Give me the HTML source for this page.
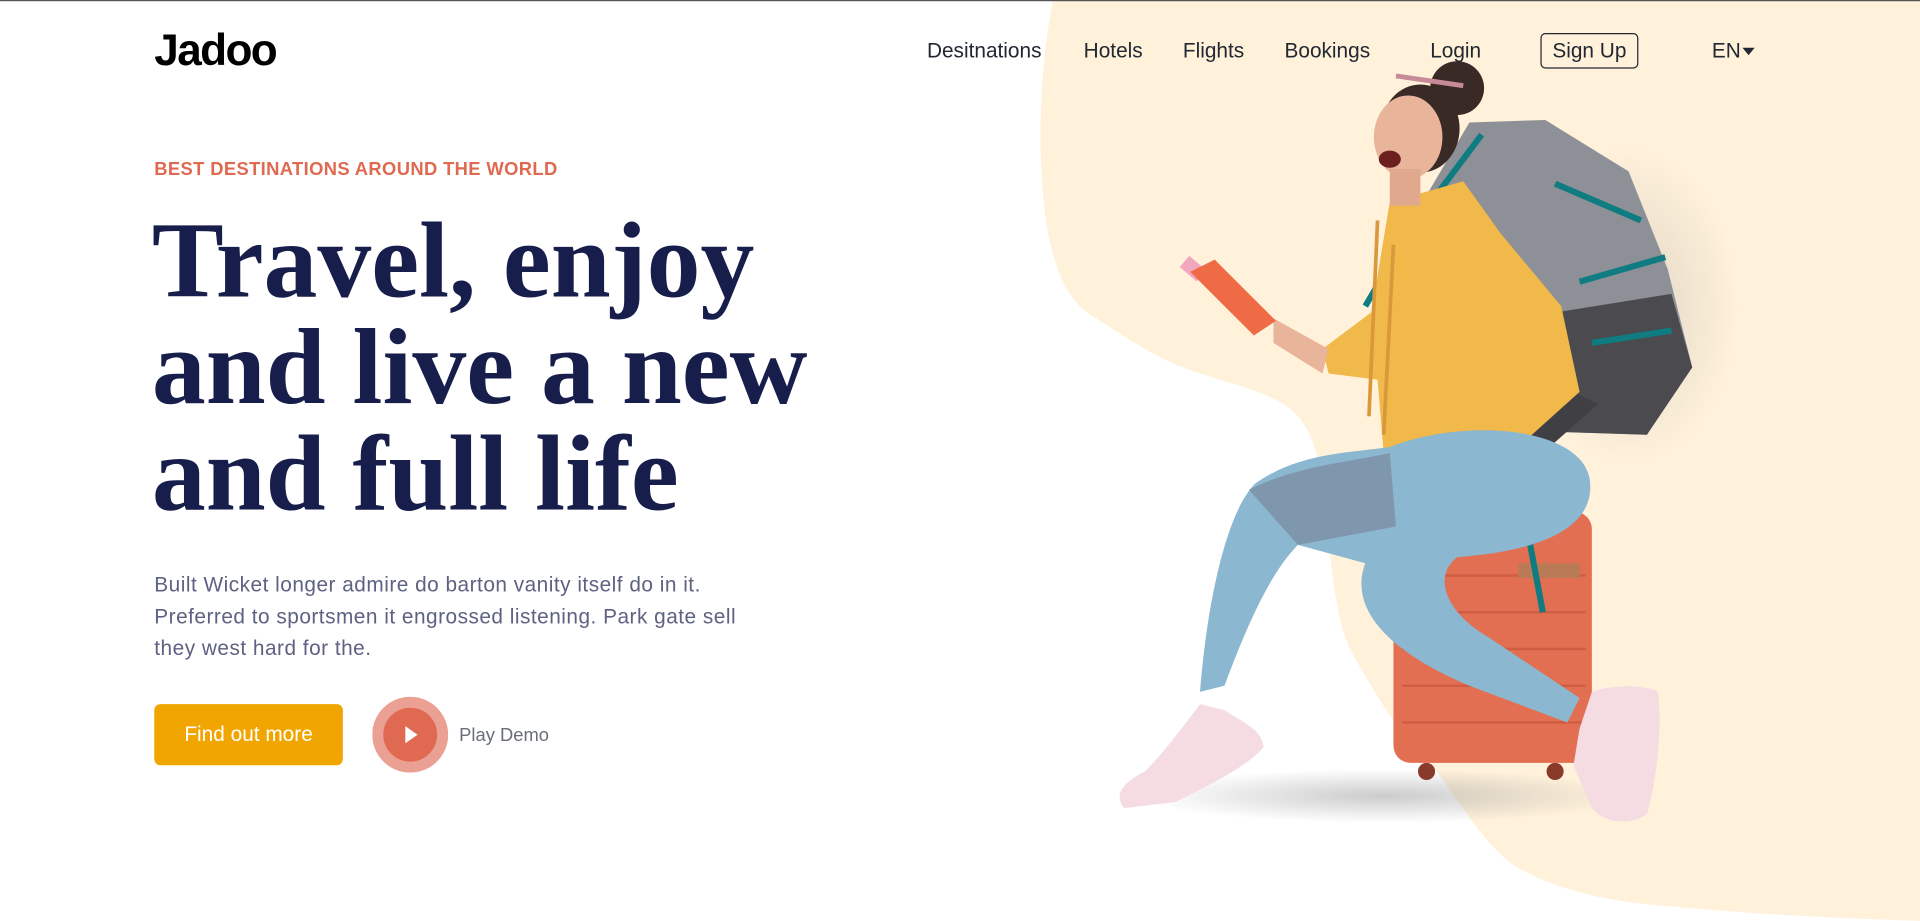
<!DOCTYPE html>
<html><head><meta charset="utf-8">
<style>
html,body{margin:0;padding:0;width:1920px;height:921px;overflow:hidden;background:#fff;}
#w{position:absolute;left:0;top:0;width:1568px;height:752px;transform:scale(1.22449);transform-origin:0 0;font-family:"Liberation Sans",sans-serif;}
.a{position:absolute;white-space:nowrap;}
.nav{font-size:17px;color:#212832;top:32px;line-height:19px;}
</style></head><body>
<div id="w">
<div style="position:absolute;left:0;top:0;width:1568px;height:1px;background:#555;z-index:5"></div>
<svg class="a" style="left:0;top:0" width="1568" height="752" viewBox="0 0 1568 752">
<defs>
<radialGradient id="sh" cx="0.5" cy="0.5" r="0.5"><stop offset="0" stop-color="#999" stop-opacity=".5"/><stop offset="1" stop-color="#999" stop-opacity="0"/></radialGradient>
</defs>
<path d="M860 0 C848 60 846 140 857 196 C866 235 878 250 894 259 C925 280 950 295 974 303 C1010 315 1045 322 1060 340 C1078 360 1082 400 1085 440 C1090 490 1095 520 1107 538 C1125 570 1140 595 1160 612 C1190 650 1210 690 1240 709 C1270 725 1300 733 1340 738 C1420 746 1500 750 1568 752 L1568 0 Z" fill="#FFF1DA"/>
<ellipse cx="1130" cy="650" rx="200" ry="22" fill="url(#sh)"/>
<ellipse cx="1330" cy="250" rx="90" ry="130" fill="url(#sh)" opacity=".6"/>
<rect x="1138" y="418" width="162" height="205" rx="14" fill="#E36F52"/>
<g stroke="#C9563D" stroke-width="2" opacity=".7"><line x1="1145" y1="470" x2="1295" y2="470"/><line x1="1145" y1="500" x2="1295" y2="500"/><line x1="1145" y1="530" x2="1295" y2="530"/><line x1="1145" y1="560" x2="1295" y2="560"/><line x1="1145" y1="590" x2="1295" y2="590"/></g>
<rect x="1240" y="460" width="50" height="12" fill="#B97B55"/>
<circle cx="1165" cy="630" r="7" fill="#8a3a2a"/><circle cx="1270" cy="630" r="7" fill="#8a3a2a"/>
<path d="M1200 100 L1262 98 L1330 140 L1362 220 L1382 300 L1345 355 L1250 352 L1200 300 L1150 185 Z" fill="#8D9097"/>
<path d="M1240 260 L1365 240 L1382 300 L1345 355 L1250 352 Z" fill="#4A4A4F"/>
<path d="M1225 290 L1305 330 L1260 370 L1215 340 Z" fill="#3f3f44"/>
<g stroke="#0E7C80" stroke-width="5" fill="none"><path d="M1210 110 L1150 190 L1115 250"/><path d="M1270 150 L1340 180"/><path d="M1290 230 L1360 210"/><path d="M1220 300 L1245 420 L1260 500"/><path d="M1300 280 L1365 270"/></g>
<path d="M1135 165 L1195 148 L1225 190 L1275 250 L1290 320 L1240 365 L1180 440 L1135 430 L1125 310 L1085 305 L1080 285 L1120 255 Z" fill="#F1B84A"/>
<path d="M1125 180 L1118 340 M1138 200 L1130 355" stroke="#D9993A" stroke-width="3"/>
<path d="M1135 365 C1200 340 1290 350 1298 390 C1305 430 1260 450 1190 455 C1170 470 1180 500 1215 520 L1290 570 L1280 590 L1200 560 C1140 535 1100 500 1115 460 L1060 445 C1035 470 1015 520 1000 560 L980 565 C985 500 1000 420 1025 395 C1060 370 1100 370 1135 365 Z" fill="#8CB7D0"/>
<path d="M1020 400 C1060 380 1100 378 1135 370 L1140 430 L1060 445 Z" fill="#7F97AC"/>
<path d="M980 575 L1000 580 C1015 590 1030 595 1032 610 C1020 625 990 640 960 655 L918 660 C910 650 915 640 935 630 C950 615 965 595 980 575 Z" fill="#F5DCE3"/>
<path d="M1300 565 C1320 558 1345 560 1354 565 C1358 600 1352 640 1345 665 C1330 675 1310 672 1300 660 L1285 625 L1290 595 Z" fill="#F5DCE3"/>
<path d="M1040 260 L1085 285 L1080 305 L1040 280 Z" fill="#E8B49A"/>
<rect x="965" y="214" width="18" height="12" fill="#F2A7C0" transform="rotate(40 975 220)"/>
<path d="M972 222 L992 212 L1042 262 L1024 274 Z" fill="#EE6B45"/>
<circle cx="1190" cy="72" r="22" fill="#3a2a25"/>
<ellipse cx="1160" cy="105" rx="32" ry="36" fill="#3a2a25"/>
<ellipse cx="1150" cy="112" rx="28" ry="34" fill="#E8B49A"/>
<ellipse cx="1135" cy="130" rx="9" ry="7" fill="#6b1f1f"/>
<path d="M1140 62 L1195 70" stroke="#c78a98" stroke-width="4"/>
<rect x="1135" y="138" width="25" height="30" fill="#E0A98E"/>
</svg>

<div class="a" style="left:126px;top:20px;font-size:36px;font-weight:bold;letter-spacing:-1.3px;color:#000;line-height:42px">Jadoo</div>
<div class="a nav" style="left:757px">Desitnations</div>
<div class="a nav" style="left:885px">Hotels</div>
<div class="a nav" style="left:966px">Flights</div>
<div class="a nav" style="left:1049px">Bookings</div>
<div class="a nav" style="left:1168px">Login</div>
<div class="a nav" style="left:1258px;top:27px;width:78px;height:27px;border:1px solid #212832;border-radius:4px;text-align:center;line-height:27px">Sign Up</div>
<div class="a nav" style="left:1398px">EN</div>
<svg class="a" style="left:1422px;top:38px" width="12" height="8" viewBox="0 0 12 8"><path d="M1 1 L11 1 L6 7 Z" fill="#212832"/></svg>

<div class="a" style="left:126px;top:130px;font-size:15px;font-weight:bold;color:#DF6951;letter-spacing:0.3px;line-height:17px">BEST DESTINATIONS AROUND THE WORLD</div>
<div class="a" style="left:124px;top:170px;font-family:'Liberation Serif',serif;font-weight:bold;font-size:88px;line-height:87px;color:#181E4B;letter-spacing:0px">Travel, enjoy<br>and live a new<br>and full life</div>
<div class="a" style="left:126px;top:465px;font-size:17px;line-height:26px;color:#5E6282;letter-spacing:0.4px">Built Wicket longer admire do barton vanity itself do in it.<br>Preferred to sportsmen it engrossed listening. Park gate sell<br>they west hard for the.</div>
<div class="a" style="left:126px;top:575px;width:154px;height:50px;border-radius:5px;background:#F1A501;color:#fff;font-size:17px;line-height:50px;text-align:center">Find out more</div>
<svg class="a" style="left:304px;top:569px" width="62" height="62" viewBox="0 0 62 62"><circle cx="31" cy="31" r="31" fill="#EBA094"/><circle cx="31" cy="31" r="22" fill="#DF6951"/><path d="M27 24 L37 31 L27 38 Z" fill="#fff"/></svg>
<div class="a" style="left:375px;top:592px;font-size:15px;color:#686D77;line-height:18px">Play Demo</div>
</div>
</body></html>
